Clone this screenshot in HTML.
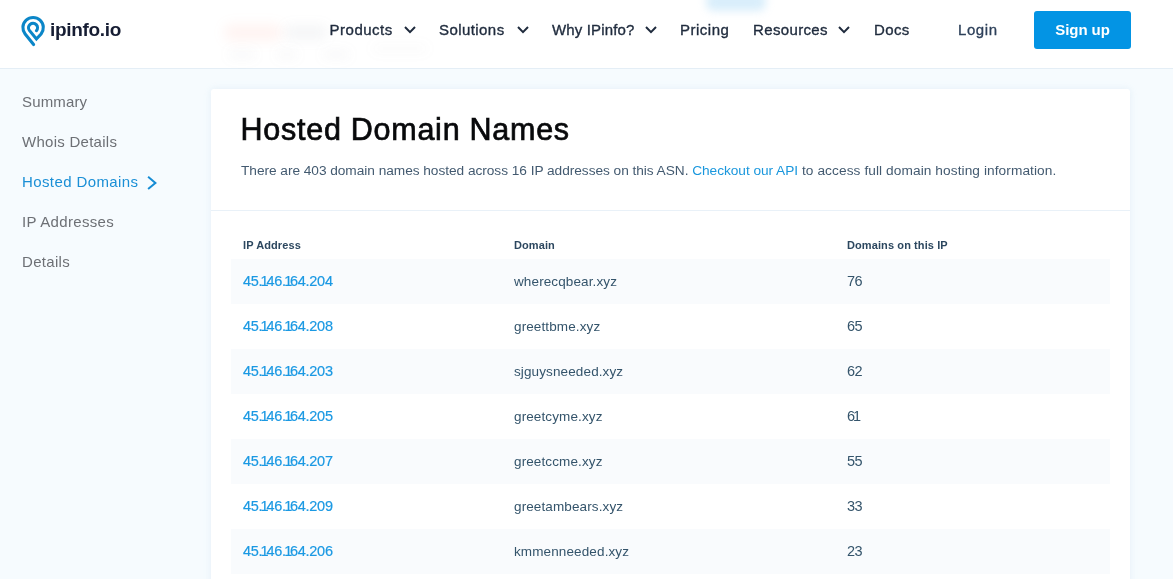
<!DOCTYPE html>
<html lang="en">
<head>
<meta charset="utf-8">
<title>Hosted Domain Names - IPinfo.io</title>
<style>
*{box-sizing:border-box;margin:0;padding:0}
html,body{width:1173px;height:579px;overflow:hidden}
body{font-family:"Liberation Sans",sans-serif;background:#f6fbfe;color:#243b53;position:relative}
a{text-decoration:none;color:#1a97dd}

/* ---------- header ---------- */
.hdr{position:absolute;left:0;top:0;width:1173px;height:69px;background:#fff;border-bottom:1px solid #e4eef6;z-index:5}
.logo{position:absolute;left:0;top:0}
.logo svg{position:absolute;left:16px;top:10px;width:36px;height:40px;overflow:visible}
.logo span{position:absolute;left:50px;top:19px;font-size:19px;line-height:22px;font-weight:700;color:#161d33;letter-spacing:-0.32px;white-space:nowrap}
.nav a{position:absolute;top:20px;font-size:15px;line-height:20px;color:#1f2b3d;white-space:nowrap;-webkit-text-stroke:0.35px #1f2b3d}
.nav svg{position:absolute;top:26.1px;width:12px;height:9px;overflow:visible}
.login{position:absolute;left:958px;top:20px;font-size:15px;letter-spacing:0.58px;line-height:20px;color:#2d405a;-webkit-text-stroke:0.3px #2d405a}
.signup{position:absolute;left:1034px;top:11px;width:97px;height:38px;border-radius:3px;background:#0394e4;color:#fff;font-size:15px;line-height:38px;text-align:center;font-weight:700;letter-spacing:-0.08px}

.hdr,.side,.card{will-change:transform}
.blur{position:absolute;border-radius:8px;filter:blur(6px)}
/* ---------- sidebar ---------- */
.side a{position:absolute;left:22px;font-size:15px;line-height:20px;color:#6d7075;white-space:nowrap}
.side a.on{color:#1a8fd6}
.side svg{position:absolute;overflow:visible}

/* ---------- card ---------- */
.card{position:absolute;left:211px;top:89px;width:919px;height:520px;background:#fff;border-radius:3px;box-shadow:0 0 7px rgba(185,212,232,.3)}
.card h1{position:absolute;left:29.5px;top:21.4px;font-size:30.5px;line-height:38px;font-weight:400;color:#08090b;white-space:nowrap;-webkit-text-stroke:0.7px #08090b;letter-spacing:0.74px}
.card p{position:absolute;left:30px;top:73px;font-size:13.7px;line-height:18px;color:#435a70;white-space:nowrap;letter-spacing:-0.04px}
.sep{position:absolute;left:0;top:121px;width:919px;height:1px;background:#e9f1f8}

table{position:absolute;left:20px;top:142px;width:879px;border-collapse:collapse;table-layout:fixed}
th{height:28px;text-align:left;padding:0 12px;font-size:11px;font-weight:700;color:#2c475f;vertical-align:middle;white-space:nowrap;letter-spacing:0.1px}
td{height:45px;padding:0 12px 1.5px;font-size:13.5px;color:#34546b;vertical-align:middle;white-space:nowrap;letter-spacing:0.08px}
td:last-child{font-size:14.5px;letter-spacing:-0.5px}
td:nth-child(2){padding-bottom:0;letter-spacing:0.12px}
tbody tr:nth-child(odd){background:#f9fbfd}
td a{color:#1b99e3;font-size:14.5px;letter-spacing:-0.3px;-webkit-text-stroke:0.2px #1b99e3}
td b{font-weight:400;margin:0 -1.8px 0 -1.7px}
</style>
</head>
<body>

<div class="hdr">
  <div class="blur" style="left:224px;top:24px;width:58px;height:17px;background:rgba(255,130,110,.09)"></div>
  <div class="blur" style="left:284px;top:25px;width:44px;height:15px;background:rgba(120,125,140,.07)"></div>
  <div class="blur" style="left:228px;top:50px;width:28px;height:9px;background:rgba(120,125,140,.05)"></div>
  <div class="blur" style="left:276px;top:50px;width:22px;height:9px;background:rgba(120,125,140,.05)"></div>
  <div class="blur" style="left:322px;top:50px;width:28px;height:9px;background:rgba(120,125,140,.05)"></div>
  <div class="blur" style="left:372px;top:44px;width:56px;height:9px;background:rgba(120,125,140,.03)"></div>
  <div class="blur" style="left:706px;top:-8px;width:60px;height:19px;background:rgba(110,190,240,.26);filter:blur(4px)"></div>
  <div class="logo">
    <svg viewBox="16 10 36 40"><path d="M36.4 30.7 A4.5 4.5 0 1 0 29.4 30.4 L36.4 39 L41.06 34.03 A10.2 10.2 0 1 0 25.14 34.03 L33.6 44.5" fill="none" stroke="#0b86c8" stroke-width="3.1" stroke-linecap="round" stroke-linejoin="miter"/></svg>
    <span>ipinfo.io</span>
  </div>
  <div class="nav">
    <a style="left:329.6px;letter-spacing:0.5px">Products</a>
    <svg style="left:404px" viewBox="0 0 12 9"><path d="M1 1 L6 6.1 L11 1" fill="none" stroke="#1f2b3d" stroke-width="2"/></svg>
    <a style="left:439px;letter-spacing:0.43px">Solutions</a>
    <svg style="left:516.5px" viewBox="0 0 12 9"><path d="M1 1 L6 6.1 L11 1" fill="none" stroke="#1f2b3d" stroke-width="2"/></svg>
    <a style="left:552px;letter-spacing:0.15px">Why IPinfo?</a>
    <svg style="left:645px" viewBox="0 0 12 9"><path d="M1 1 L6 6.1 L11 1" fill="none" stroke="#1f2b3d" stroke-width="2"/></svg>
    <a style="left:680px;letter-spacing:0.5px">Pricing</a>
    <a style="left:753px;letter-spacing:0.36px">Resources</a>
    <svg style="left:838px" viewBox="0 0 12 9"><path d="M1 1 L6 6.1 L11 1" fill="none" stroke="#1f2b3d" stroke-width="2"/></svg>
    <a style="left:874px;letter-spacing:0.36px">Docs</a>
  </div>
  <a class="login">Login</a>
  <a class="signup">Sign up</a>
</div>

<div class="side">
  <a style="top:92px;letter-spacing:0.14px">Summary</a>
  <a style="top:132px;letter-spacing:0.27px">Whois Details</a>
  <a class="on" style="top:172px;letter-spacing:0.4px">Hosted Domains</a>
  <svg style="left:146px;top:176px;width:12px;height:14px" viewBox="0 0 12 14"><path d="M2.1 0.8 L9.4 6.9 L2.1 13" fill="none" stroke="#158cd4" stroke-width="2"/></svg>
  <a style="top:212px;letter-spacing:0.33px">IP Addresses</a>
  <a style="top:252px;letter-spacing:0.3px">Details</a>
</div>

<div class="card">
  <h1>Hosted Domain Names</h1>
  <p>There are 403 domain names hosted across 16 IP addresses on this ASN. <a>Checkout our API</a><span style="letter-spacing:0.08px"> to access full domain hosting information.</span></p>
  <div class="sep"></div>
  <table>
    <colgroup><col style="width:271px"><col style="width:333px"><col></colgroup>
    <thead><tr><th>IP Address</th><th>Domain</th><th>Domains on this IP</th></tr></thead>
    <tbody>
      <tr><td><a>45.<b>1</b>46.<b>1</b>64.204</a></td><td>wherecqbear.xyz</td><td>76</td></tr>
      <tr><td><a>45.<b>1</b>46.<b>1</b>64.208</a></td><td>greettbme.xyz</td><td>65</td></tr>
      <tr><td><a>45.<b>1</b>46.<b>1</b>64.203</a></td><td>sjguysneeded.xyz</td><td>62</td></tr>
      <tr><td><a>45.<b>1</b>46.<b>1</b>64.205</a></td><td>greetcyme.xyz</td><td>6<b>1</b></td></tr>
      <tr><td><a>45.<b>1</b>46.<b>1</b>64.207</a></td><td>greetccme.xyz</td><td>55</td></tr>
      <tr><td><a>45.<b>1</b>46.<b>1</b>64.209</a></td><td>greetambears.xyz</td><td>33</td></tr>
      <tr><td><a>45.<b>1</b>46.<b>1</b>64.206</a></td><td>kmmenneeded.xyz</td><td>23</td></tr>
      <tr><td><a>45.<b>1</b>46.<b>1</b>64.201</a></td><td>greetcame.xyz</td><td>20</td></tr>
    </tbody>
  </table>
</div>

</body>
</html>
